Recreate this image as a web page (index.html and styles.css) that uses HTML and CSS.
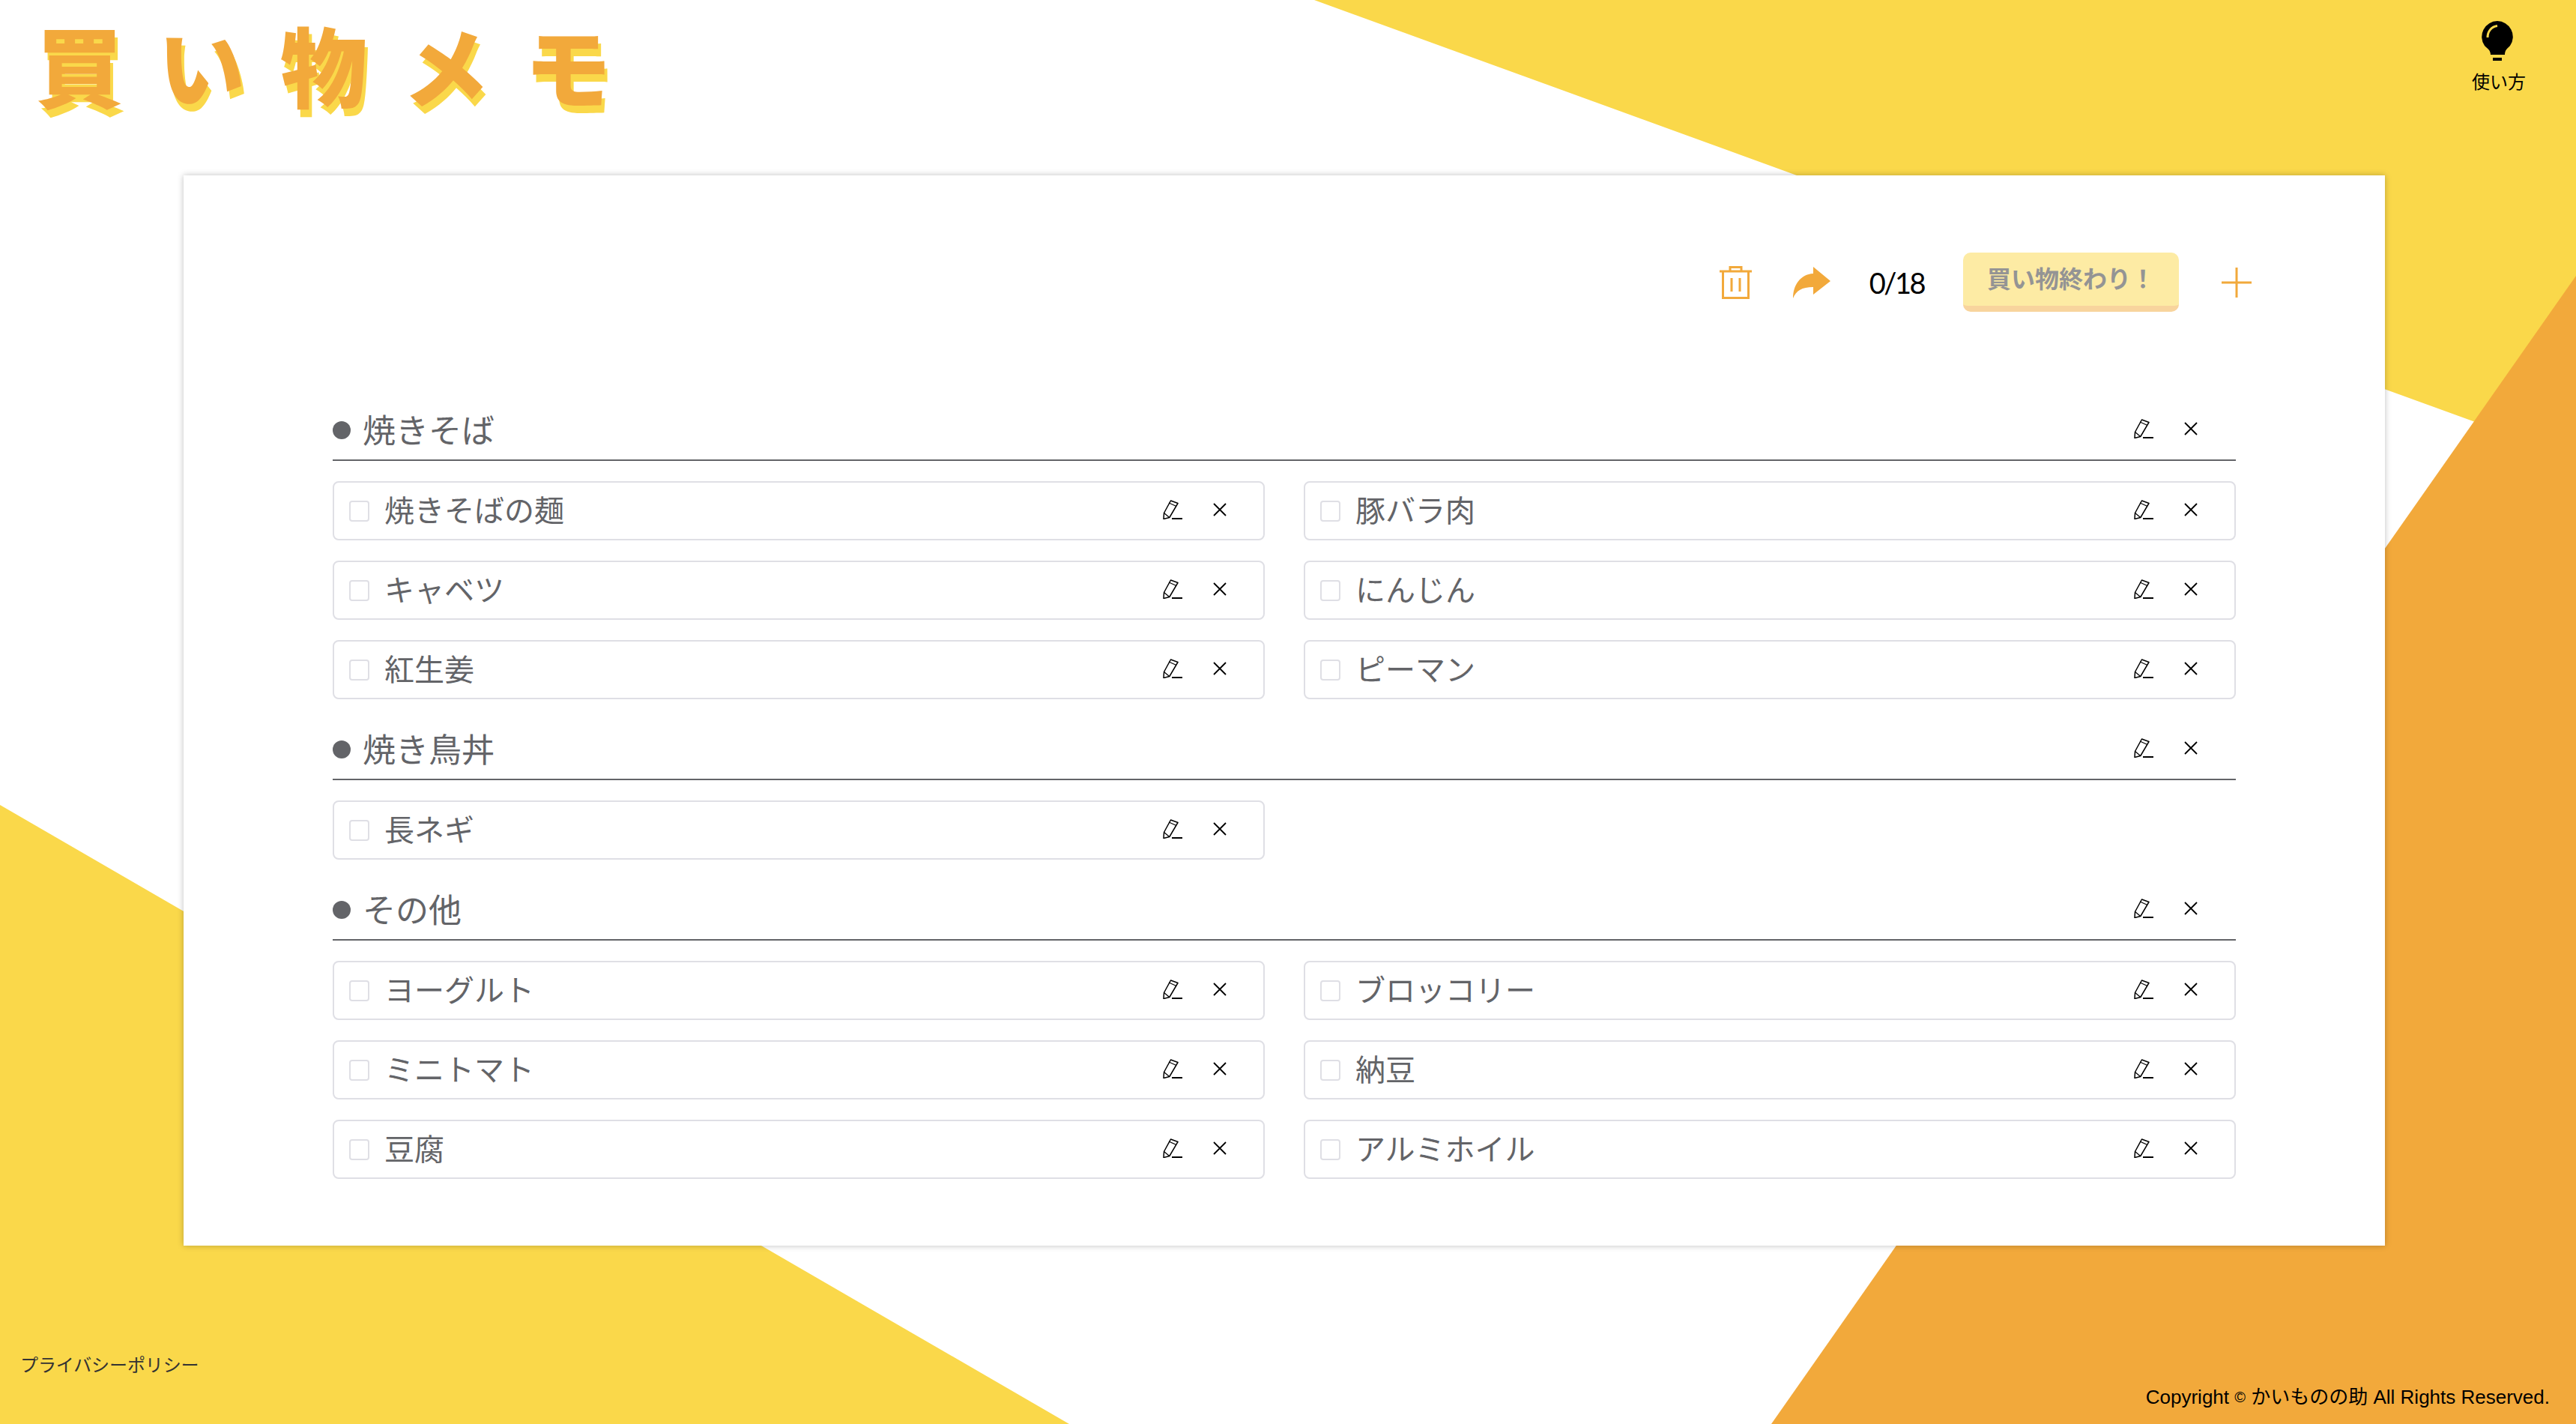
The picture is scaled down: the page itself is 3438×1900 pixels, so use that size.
FILE: index.html
```html
<!DOCTYPE html>
<html lang="ja">
<head>
<meta charset="utf-8">
<title>買い物メモ</title>
<link rel="stylesheet" href="styles.css">
</head>
<body>
<svg class="defs" aria-hidden="true">
  <symbol id="pencil" viewBox="0 0 26 26">
    <path d="M10.500 1 20 4.500 8.800 23.500 1 25.500 1.500 17.500Z" fill="none" stroke="currentColor" stroke-width="1.500" stroke-linejoin="round"/>
    <path d="M8 4 18 8.500M1.500 17.500 8.800 23.500" fill="none" stroke="currentColor" stroke-width="1.300"/>
    <path d="M12 25H26" fill="none" stroke="currentColor" stroke-width="2"/>
  </symbol>
  <symbol id="cross" viewBox="0 0 18 18">
    <path d="M1 1 17 17M17 1 1 17" fill="none" stroke="currentColor" stroke-width="1.800"/>
  </symbol>
</svg>
<div class="page">
  <svg class="bg" viewBox="0 0 3438 1900" aria-hidden="true">
    <polygon class="y" points="1754,0 3438,0 3438,612"/>
    <polygon class="y" points="0,1074 1427,1900 0,1900"/>
    <polygon class="o" points="3438,368 3438,1900 2364,1900"/>
  </svg>
  <header class="top">
    <h1 class="logo">買い物メモ</h1>
    <a class="howto">
      <svg class="bulb" viewBox="0 0 42 53">
        <path d="M21 0A21 21 0 0 1 38 33C34 37 31 39 31 45H12C12 39 8 37 4 33A21 21 0 0 1 21 0Z" fill="#000"/>
        <path d="M8 22C8 14 13 7.500 21 6.500" fill="none" stroke="#fad84a" stroke-width="3"/>
        <rect x="15" y="49" width="12" height="4" fill="#000"/>
      </svg>
      <span class="howto-label">使い方</span>
    </a>
  </header>
  <main class="card">
    <div class="toolbar">
      <svg class="trash" viewBox="0 0 43 44">
        <path d="M0 7H43M4.500 7V42.500H38.500V7M14 7V1.500H29V7M16 16V34M27 16V34" fill="none" stroke="#f2a93b" stroke-width="3"/>
      </svg>
      <svg class="share" viewBox="0 0 50 42">
        <path d="M50 19 27 0V9C10 10 0 24 0 42 4 32 12 27 27 27V37Z" fill="#f2a93b"/>
      </svg>
      <span class="count">0/18</span>
      <button class="finish">買い物終わり！</button>
      <svg class="plus" viewBox="0 0 40 40">
        <path d="M20 0V40M0 20H40" fill="none" stroke="#f2a93b" stroke-width="3"/>
      </svg>
    </div>

    <section class="group">
      <div class="group-head">
        <span class="dot"></span><h2>焼きそば</h2>
        <svg class="ico pen"><use href="#pencil"/></svg><svg class="ico x"><use href="#cross"/></svg>
      </div>
      <div class="grid">
        <div class="item"><span class="check"></span><span class="name">焼きそばの麺</span><svg class="ico pen"><use href="#pencil"/></svg><svg class="ico x"><use href="#cross"/></svg></div>
        <div class="item"><span class="check"></span><span class="name">豚バラ肉</span><svg class="ico pen"><use href="#pencil"/></svg><svg class="ico x"><use href="#cross"/></svg></div>
        <div class="item"><span class="check"></span><span class="name">キャベツ</span><svg class="ico pen"><use href="#pencil"/></svg><svg class="ico x"><use href="#cross"/></svg></div>
        <div class="item"><span class="check"></span><span class="name">にんじん</span><svg class="ico pen"><use href="#pencil"/></svg><svg class="ico x"><use href="#cross"/></svg></div>
        <div class="item"><span class="check"></span><span class="name">紅生姜</span><svg class="ico pen"><use href="#pencil"/></svg><svg class="ico x"><use href="#cross"/></svg></div>
        <div class="item"><span class="check"></span><span class="name">ピーマン</span><svg class="ico pen"><use href="#pencil"/></svg><svg class="ico x"><use href="#cross"/></svg></div>
      </div>
    </section>

    <section class="group">
      <div class="group-head">
        <span class="dot"></span><h2>焼き鳥丼</h2>
        <svg class="ico pen"><use href="#pencil"/></svg><svg class="ico x"><use href="#cross"/></svg>
      </div>
      <div class="grid">
        <div class="item"><span class="check"></span><span class="name">長ネギ</span><svg class="ico pen"><use href="#pencil"/></svg><svg class="ico x"><use href="#cross"/></svg></div>
      </div>
    </section>

    <section class="group">
      <div class="group-head">
        <span class="dot"></span><h2>その他</h2>
        <svg class="ico pen"><use href="#pencil"/></svg><svg class="ico x"><use href="#cross"/></svg>
      </div>
      <div class="grid">
        <div class="item"><span class="check"></span><span class="name">ヨーグルト</span><svg class="ico pen"><use href="#pencil"/></svg><svg class="ico x"><use href="#cross"/></svg></div>
        <div class="item"><span class="check"></span><span class="name">ブロッコリー</span><svg class="ico pen"><use href="#pencil"/></svg><svg class="ico x"><use href="#cross"/></svg></div>
        <div class="item"><span class="check"></span><span class="name">ミニトマト</span><svg class="ico pen"><use href="#pencil"/></svg><svg class="ico x"><use href="#cross"/></svg></div>
        <div class="item"><span class="check"></span><span class="name">納豆</span><svg class="ico pen"><use href="#pencil"/></svg><svg class="ico x"><use href="#cross"/></svg></div>
        <div class="item"><span class="check"></span><span class="name">豆腐</span><svg class="ico pen"><use href="#pencil"/></svg><svg class="ico x"><use href="#cross"/></svg></div>
        <div class="item"><span class="check"></span><span class="name">アルミホイル</span><svg class="ico pen"><use href="#pencil"/></svg><svg class="ico x"><use href="#cross"/></svg></div>
      </div>
    </section>
  </main>
  <footer class="foot">
    <a class="privacy">プライバシーポリシー</a>
    <p class="copy">Copyright <small>©</small> かいものの助 All Rights Reserved.</p>
  </footer>
</div>
</body>
</html>
```

FILE: styles.css
```css
* { box-sizing: border-box; }
html, body { margin: 0; padding: 0; }
body {
  font-family: "Noto Sans CJK JP", "Noto Sans", sans-serif;
  color: #636468;
  background: #fff;
  overflow: hidden;
}
.defs { position: absolute; width: 0; height: 0; }
.page { position: relative; width: 3438px; height: 1900px; overflow: hidden; }
.bg { position: absolute; inset: 0; width: 100%; height: 100%; }
.bg .y { fill: #fad84a; }
.bg .o { fill: #f2a93b; }

.top {
  position: relative;
  height: 234px;
  display: flex;
  justify-content: space-between;
  align-items: flex-start;
  padding: 0 66px 0 48px;
}
.logo {
  margin: 14px 0 0;
  font-size: 116px;
  line-height: 140px;
  font-weight: 900;
  letter-spacing: 47px;
  color: #f2a93b;
  text-shadow: 4px 10px 0 #fad84a;
  white-space: nowrap;
}
.howto {
  margin-top: 28px;
  display: flex;
  flex-direction: column;
  align-items: center;
  color: #000;
  font-size: 24px;
  line-height: 34px;
  width: 74px;
}
.bulb { width: 42px; height: 53px; margin: 0 4px 10px 0; flex: none; }
.howto-label { white-space: nowrap; }

.card {
  position: relative;
  width: 2938px;
  height: 1428px;
  margin-left: 245px;
  background: #fff;
  box-shadow: 0 0 8px rgba(0, 0, 0, .25);
  padding: 103px 178px 0;
}
.toolbar {
  display: flex;
  justify-content: flex-end;
  align-items: center;
  height: 79px;
  margin-bottom: 118px;
}
.trash { width: 43px; height: 44px; margin-right: 55px; }
.share { width: 50px; height: 42px; margin-right: 52px; }
.count {
  font-family: "Lato", sans-serif;
  font-size: 38px;
  font-weight: 400;
  line-height: 40px;
  letter-spacing: -2.5px;
  color: #000;
  margin-right: 52px;
}
.finish {
  width: 288px;
  height: 79px;
  border: 0;
  border-bottom: 8px solid #f8d49d;
  border-radius: 10px;
  background: #fdeba4;
  color: #949494;
  font-family: inherit;
  font-weight: 700;
  font-size: 32px;
  padding: 0 0 6px;
  margin-right: 57px;
}
.plus { width: 40px; height: 40px; }

.group { margin: 0 21px 27px; }
.group-head {
  display: flex;
  align-items: center;
  height: 81px;
  border-bottom: 2px solid #636468;
  padding-right: 51px;
}
.dot { width: 24px; height: 24px; border-radius: 50%; background: #636468; margin-right: 16px; }
h2 { margin: -3px 0 0; flex: 1; font-size: 44px; font-weight: 400; line-height: 60px; }
.grid {
  display: grid;
  grid-template-columns: 1fr 1fr;
  gap: 27px 52px;
  margin-top: 27px;
}
.item {
  display: flex;
  align-items: center;
  height: 79px;
  border: 2px solid #dfdfe5;
  border-radius: 8px;
  padding: 0 49px 0 20px;
}
.check {
  width: 27px;
  height: 28px;
  border: 2px solid #dfdfe5;
  border-radius: 4px;
  margin: 0 20px 0 0;
}
.name { flex: 1; font-size: 40px; line-height: 54px; margin-top: -5px; }
.ico { color: #000; display: block; margin-top: -3px; }
.ico.pen { width: 26px; height: 26px; margin-right: 41px; }
.ico.x { width: 18px; height: 18px; }

.foot {
  position: relative;
  height: 238px;
  display: flex;
  justify-content: space-between;
  align-items: flex-start;
  padding: 0 35px 0 27px;
}
.privacy { margin-top: 141px; font-size: 24px; line-height: 34px; letter-spacing: -.1px; color: #333; }
.copy {
  margin: 184px 0 0;
  font-family: "Liberation Sans", "Noto Sans CJK JP", sans-serif;
  font-size: 26px;
  line-height: 36px;
  color: #000;
}
.copy small { font-size: 20px; vertical-align: 2px; }
```
